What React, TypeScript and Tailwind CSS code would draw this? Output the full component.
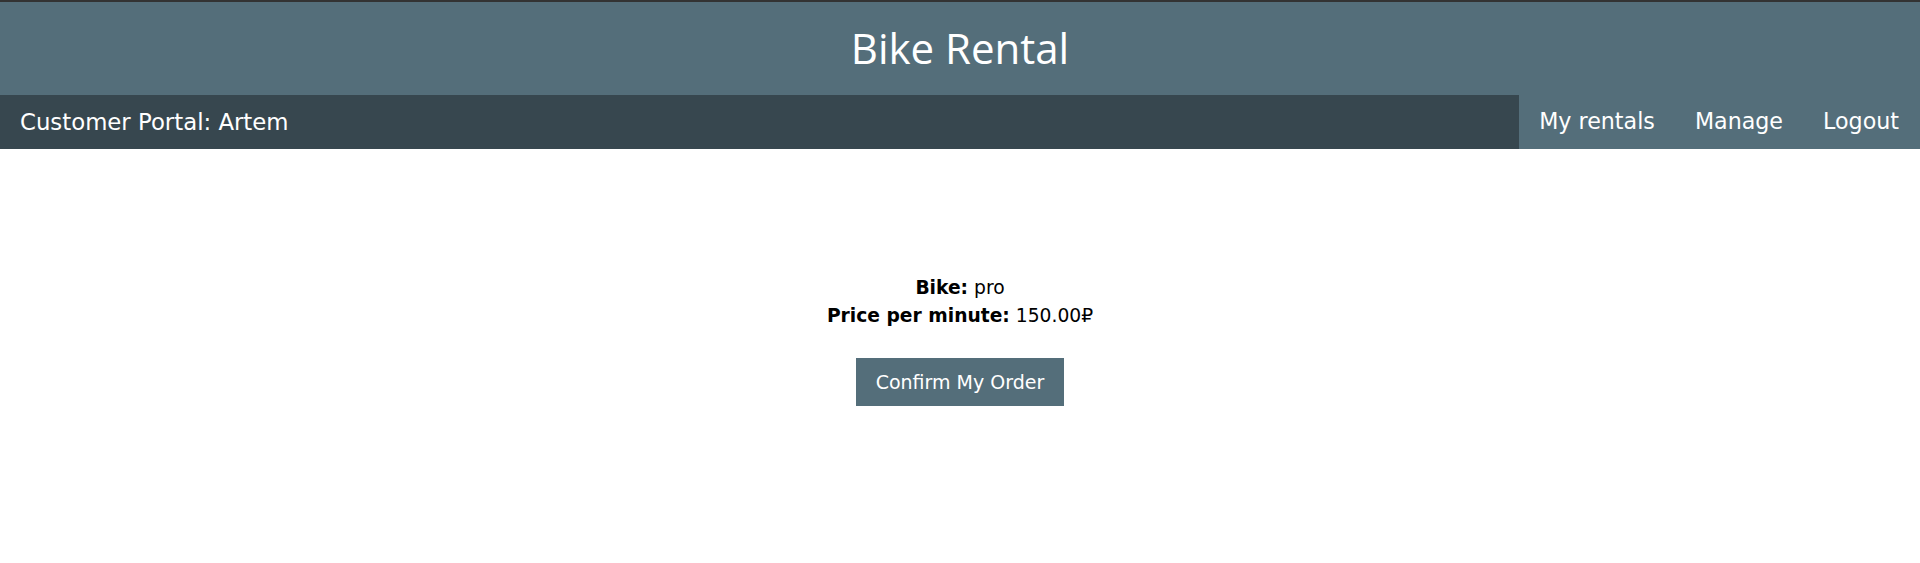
const links = ["My rentals", "Manage", "Logout"]

const App = () => {
  return (
    <div className="min-h-screen bg-white font-['DejaVu_Sans',Verdana,sans-serif]">
      <header className="h-[95px] border-t-2 border-[#333333] bg-[#546e7a] flex items-center justify-center">
        <h1 className="text-[42px] leading-none text-white font-['Open_Sans',sans-serif] pb-[1px]">
          Bike Rental
        </h1>
      </header>

      <nav className="h-[54px] flex bg-[#546e7a] text-white text-[22.2px]">
        <div className="flex-1 bg-[#37474f] flex items-center pl-[20px] text-[22.8px]">
          Customer Portal: Artem
        </div>
        <ul className="flex items-center pr-[1px]">
          {links.map((link) => (
            <li key={link} className="px-[20px] cursor-pointer">
              {link}
            </li>
          ))}
        </ul>
      </nav>

      <main className="pt-[125px] flex flex-col items-center text-[18.7px] leading-[28px] text-black">
        <p>
          <b>Bike:</b> pro
        </p>
        <p>
          <b>Price per minute:</b> 150.00₽
        </p>
        <button className="mt-[28px] h-[48px] px-[20px] bg-[#546e7a] text-white text-[19px]">
          Confirm My Order
        </button>
      </main>
    </div>
  )
}

export default App
